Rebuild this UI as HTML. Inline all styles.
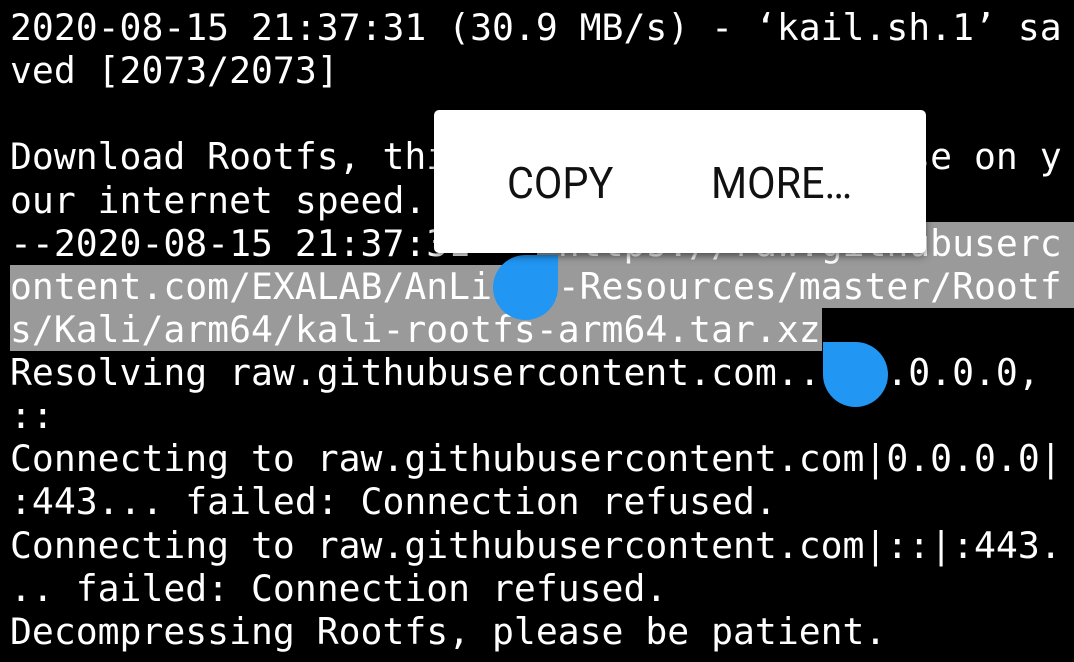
<!DOCTYPE html>
<html><head><meta charset="utf-8"><style>
html,body{margin:0;padding:0;background:#000;width:1074px;height:662px;overflow:hidden;position:relative}
.t{position:absolute;left:10px;top:6px;font-family:"DejaVu Sans Mono","Liberation Mono",monospace;font-size:36.4px;line-height:43.13px;color:#fff;white-space:pre}
.hl{position:absolute;background:#9a9a9a}
.pop{position:absolute;left:434px;top:110px;width:492px;height:143px;background:#fff;border-radius:5px;box-shadow:0 3px 8px rgba(0,0,0,.5)}
.b{position:absolute;top:50px;font-family:"Roboto","Liberation Sans",sans-serif;font-size:44px;line-height:46px;color:#111;transform:scaleX(.94);transform-origin:left top}
.h{position:absolute;width:65px;height:65px;background:#2196F3;border-radius:50%}
</style></head><body>
<div class="hl" style="left:537px;top:222px;width:537px;height:43px"></div>
<div class="hl" style="left:10px;top:265px;width:1064px;height:43px"></div>
<div class="hl" style="left:10px;top:308px;width:812px;height:43px"></div>
<div class="t">2020-08-15 21:37:31 (30.9 MB/s) - ‘kail.sh.1’ sa
ved [2073/2073]

Download Rootfs, this may take a while base on y
our internet speed.
--2020-08-15 21:37:31--  https://raw.githubuserc
ontent.com/EXALAB/AnLinux-Resources/master/Rootf
s/Kali/arm64/kali-rootfs-arm64.tar.xz
Resolving raw.githubusercontent.com... 0.0.0.0,
::
Connecting to raw.githubusercontent.com|0.0.0.0|
:443... failed: Connection refused.
Connecting to raw.githubusercontent.com|::|:443.
.. failed: Connection refused.
Decompressing Rootfs, please be patient.</div>
<div class="h" style="left:493px;top:255px;border-top-right-radius:0"></div>
<div class="h" style="left:823px;top:342px;border-top-left-radius:0"></div>
<div class="pop">
<div class="b" style="left:73px">COPY</div>
<div class="b" style="left:277px">MORE…</div>
</div>
</body></html>
